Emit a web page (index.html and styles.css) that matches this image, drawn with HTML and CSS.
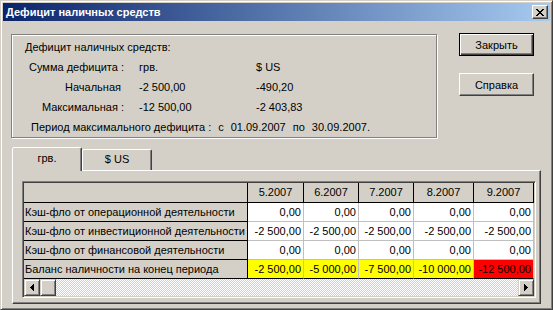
FILE: index.html
```html
<!DOCTYPE html>
<html lang="ru">
<head>
    <meta charset="UTF-8">
    <title>Дефицит наличных средств</title>
    <link rel="stylesheet" href="styles.css">
</head>
<body>
<div class="window">
    <div class="titlebar">
        <span class="title">Дефицит наличных средств</span>
        <span class="close-btn">
            <svg width="8" height="7" viewBox="0 0 8 7" shape-rendering="crispEdges">
                <path fill="#000" d="M0 0h2v1h-2z M6 0h2v1h-2z M1 1h2v1h-2z M5 1h2v1h-2z M2 2h4v1h-4z M3 3h2v1h-2z M2 4h4v1h-4z M1 5h2v1h-2z M5 5h2v1h-2z M0 6h2v1h-2z M6 6h2v1h-2z"/>
            </svg>
        </span>
    </div>

    <div class="dialog">
        <div class="top-row">
            <div class="groupbox">
                <div class="gb-title">Дефицит наличных средств:</div>
                <div class="gb-grid">
                    <span class="lbl">Сумма дефицита :</span><span class="v1">грв.</span><span>$ US</span>
                    <span class="lbl lbl-nocolon">Начальная</span><span class="v1">-2 500,00</span><span>-490,20</span>
                    <span class="lbl">Максимальная :</span><span class="v1">-12 500,00</span><span>-2 403,83</span>
                </div>
                <div class="period">
                    <span>Период максимального дефицита :</span>
                    <span>с</span>
                    <span>01.09.2007</span>
                    <span>по</span>
                    <span>30.09.2007.</span>
                </div>
            </div>
            <div class="buttons">
                <button class="btn btn-default">Закрыть</button>
                <button class="btn">Справка</button>
            </div>
        </div>

        <div class="tabs">
            <div class="tab tab-active">грв.</div>
            <div class="tab">$ US</div>
        </div>
        <div class="tab-panel">
            <div class="grid-frame">
                <div class="grid">
                    <div class="cell head"></div>
                    <div class="cell head">5.2007</div>
                    <div class="cell head">6.2007</div>
                    <div class="cell head">7.2007</div>
                    <div class="cell head">8.2007</div>
                    <div class="cell head">9.2007</div>

                    <div class="cell rowhead">Кэш-фло от операционной деятельности</div>
                    <div class="cell">0,00</div>
                    <div class="cell">0,00</div>
                    <div class="cell">0,00</div>
                    <div class="cell">0,00</div>
                    <div class="cell">0,00</div>

                    <div class="cell rowhead">Кэш-фло от инвестиционной деятельности</div>
                    <div class="cell">-2 500,00</div>
                    <div class="cell">-2 500,00</div>
                    <div class="cell">-2 500,00</div>
                    <div class="cell">-2 500,00</div>
                    <div class="cell">-2 500,00</div>

                    <div class="cell rowhead">Кэш-фло от финансовой деятельности</div>
                    <div class="cell">0,00</div>
                    <div class="cell">0,00</div>
                    <div class="cell">0,00</div>
                    <div class="cell">0,00</div>
                    <div class="cell">0,00</div>

                    <div class="cell rowhead last">Баланс наличности на конец периода</div>
                    <div class="cell last warn">-2 500,00</div>
                    <div class="cell last warn">-5 000,00</div>
                    <div class="cell last warn">-7 500,00</div>
                    <div class="cell last warn">-10 000,00</div>
                    <div class="cell last alert">-12 500,00</div>
                </div>
                <div class="hscroll">
                    <span class="sb-btn">
                        <svg width="4" height="7" viewBox="0 0 4 7" shape-rendering="crispEdges">
                            <path fill="#000" d="M3 0h1v7h-1z M2 1h1v5h-1z M1 2h1v3h-1z M0 3h1v1h-1z"/>
                        </svg>
                    </span>
                    <span class="sb-btn"></span>
                    <span class="sb-track"></span>
                    <span class="sb-btn">
                        <svg width="4" height="7" viewBox="0 0 4 7" shape-rendering="crispEdges">
                            <path fill="#000" d="M0 0h1v7h-1z M1 1h1v5h-1z M2 2h1v3h-1z M3 3h1v1h-1z"/>
                        </svg>
                    </span>
                </div>
            </div>
        </div>
    </div>
</div>
</body>
</html>
```

FILE: styles.css
```css
* {
    margin: 0;
    padding: 0;
    box-sizing: border-box;
}

body {
    width: 553px;
    height: 310px;
    overflow: hidden;
    background: #d4d0c8;
    font-family: "Liberation Sans", Arial, sans-serif;
    font-size: 11px;
    color: #000;
}

/* window frame */
.window {
    width: 553px;
    height: 310px;
    padding: 2px;
    display: flex;
    flex-direction: column;
    background: #d4d0c8;
    border: 1px solid;
    border-color: #d4d0c8 #404040 #404040 #d4d0c8;
    box-shadow: inset 1px 1px #fff, inset -1px -1px #808080;
}

.titlebar {
    height: 18px;
    display: flex;
    align-items: center;
    justify-content: space-between;
    padding: 0 2px 0 3px;
    background: linear-gradient(to right, #0a246a, #a6caf0);
    color: #fff;
    font-weight: bold;
    font-size: 11px;
}

.close-btn {
    width: 16px;
    height: 14px;
    display: flex;
    align-items: center;
    justify-content: center;
    padding-right: 1px;
    background: #d4d0c8;
    border: 1px solid;
    border-color: #fff #404040 #404040 #fff;
    box-shadow: inset -1px -1px #808080;
}

.dialog {
    flex: 1;
    display: flex;
    flex-direction: column;
}

/* top part */
.top-row {
    height: 126px;
    display: flex;
    align-items: flex-start;
}

.groupbox {
    width: 426px;
    height: 104px;
    margin: 13px 0 0 8px;
    padding: 2px 0 0 13px;
    border: 1px solid #808080;
    box-shadow: inset 1px 1px #fff, 1px 1px #fff;
    line-height: 20px;
}

.gb-grid {
    display: grid;
    grid-template-columns: 99px 132px auto;
}

.lbl {
    text-align: right;
}

.lbl-nocolon {
    padding-right: 3px;
}

.v1 {
    padding-left: 15px;
}

.period {
    display: flex;
    padding-left: 6px;
    white-space: nowrap;
}

.period span + span {
    margin-left: 7px;
}

.buttons {
    display: flex;
    flex-direction: column;
    gap: 17px;
    margin: 12px 0 0 22px;
}

.btn {
    width: 75px;
    height: 23px;
    font: inherit;
    color: #000;
    background: #d4d0c8;
    border: 1px solid;
    border-color: #fff #404040 #404040 #fff;
    box-shadow: inset -1px -1px #808080;
}

.btn-default {
    border: 1px solid #000;
    box-shadow: inset 1px 1px #fff, inset -1px -1px #404040, inset -2px -2px #808080;
}

/* tabs */
.tabs {
    height: 23px;
    margin-left: 9px;
    display: flex;
    align-items: flex-end;
    position: relative;
    z-index: 1;
}

.tab {
    width: 70px;
    height: 21px;
    display: flex;
    align-items: center;
    justify-content: center;
    padding-bottom: 2px;
    border: 1px solid;
    border-bottom: none;
    border-color: #fff #404040 transparent #fff;
    border-radius: 2px 2px 0 0;
    box-shadow: inset -1px 0 #808080;
    background: #d4d0c8;
}

.tab-active {
    height: 24px;
    margin-bottom: -1px;
    padding-bottom: 3px;
}

.tab-panel {
    width: 529px;
    height: 134px;
    margin-left: 9px;
    padding: 10px 0 0 9px;
    border: 1px solid;
    border-color: #fff #404040 #404040 #fff;
    box-shadow: inset -1px -1px #808080;
}

/* string grid */
.grid-frame {
    width: 514px;
    padding: 1px;
    border: 1px solid;
    border-color: #808080 #fff #fff #808080;
    box-shadow: inset 1px 1px #404040;
}

.grid {
    display: grid;
    grid-template-columns: 224px 56px 55px 55px 60px 60px;
    background: #fff;
}

.cell {
    height: 19px;
    line-height: 18px;
    padding-right: 2px;
    text-align: right;
    white-space: nowrap;
    overflow: hidden;
    border-right: 1px solid #c0c0c0;
    border-bottom: 1px solid #c0c0c0;
}

.cell.head {
    height: 20px;
    line-height: 19px;
    padding: 0;
    text-align: center;
    background: #d4d0c8;
    border-color: #000;
}

.cell.rowhead {
    padding-left: 1px;
    text-align: left;
    background: #d4d0c8;
    border-color: #000;
}

.cell.last {
    border-bottom-color: #000;
}

.cell.warn {
    background: #ffff00;
}

.cell.alert {
    background: #ff0000;
}

.hscroll {
    height: 17px;
    display: flex;
    background: repeating-conic-gradient(#fff 0 25%, #d4d0c8 0 50%) 0 0 / 2px 2px;
}

.sb-btn {
    width: 16px;
    height: 17px;
    display: flex;
    align-items: center;
    justify-content: center;
    background: #d4d0c8;
    border: 1px solid;
    border-color: #d4d0c8 #404040 #404040 #d4d0c8;
    box-shadow: inset 1px 1px #fff, inset -1px -1px #808080;
}

.sb-track {
    flex: 1;
}
```
